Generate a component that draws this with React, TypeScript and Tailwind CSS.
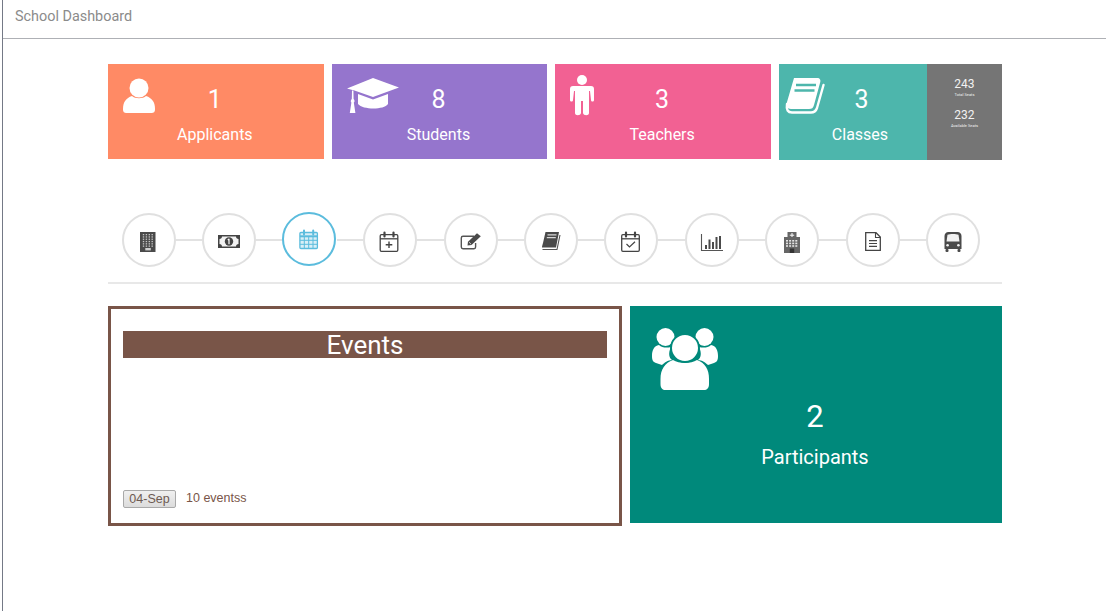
import React from "react";

const D = "#444444";

function PersonIcon() {
  return (
    <svg width="34" height="36" viewBox="0 0 34 36" fill="white" className="block">
      <path d="M1 31 C1 24 4 20 10 18 C13 21 21 21 24 18 C30 20 33 24 33 31 C33 34 32 35 29 35 L5 35 C2 35 1 34 1 31 Z" />
      <circle cx="17" cy="10" r="9.5" />
    </svg>
  );
}

function CapIcon() {
  return (
    <svg width="54" height="38" viewBox="0 0 54 38" fill="white" className="block">
      <path d="M27 1 L53 10.5 L27 20 L7 13 L6.4 13 L1 11.5 Z" />
      <path d="M12 17 L27 22.5 L42 17 L42 27 C38 33 17 33 12 27 Z" />
      <path d="M6 13.5 L7.4 13.5 L7.6 22 C9 23.5 8.6 25 7.8 25.6 L9.4 36 L3.8 36 L5.4 25.6 C4.6 25 4.4 23.4 5.8 22 Z" />
    </svg>
  );
}

function TeacherIcon() {
  return (
    <svg width="24" height="41" viewBox="0 0 24 41" fill="white" className="block">
      <circle cx="12" cy="5" r="5" />
      <path d="M3 11 L21 11 C23 11 24 12 24 14 L24 25 C24 27 21 27 21 25 L20 16 L19 16 L19 38 C19 41 13.5 41 13 38 L13 26 L11 26 L11 38 C10.5 41 5 41 5 38 L5 16 L4 16 L3 25 C3 27 0 27 0 25 L0 14 C0 12 1 11 3 11 Z" />
    </svg>
  );
}

function BookIcon() {
  return (
    <svg width="40" height="37" viewBox="0 0 40 37" className="block">
      <path d="M9 1 L32 1 C35 1 36 3 35 6 L29 28 C28 31 27 32 24 32 L6 32 C2 32 1 29 2 25 Z" fill="white" />
      <path d="M2 27 C1 33 3 35.5 7 35.5 L26 35.5 C29 35.5 31 34 32 31 L38.5 8" fill="none" stroke="white" strokeWidth="2.4" strokeLinecap="round" />
      <path d="M11 8 L31 8 M9.5 13.5 L29.5 13.5" stroke="#4db6ac" strokeWidth="2.4" />
    </svg>
  );
}

function GroupIcon() {
  return (
    <svg width="67" height="64" viewBox="0 0 67 64" fill="white" className="block">
      <circle cx="13.5" cy="10" r="9" />
      <circle cx="52.5" cy="10" r="9" />
      <path d="M0 29 C0 23 2 19 7 18 C10 21 15 21 19 20 C16 26 17 31 20 33 C16 33 12 36 10 38 L4 36 C1 35 0 33 0 29 Z" />
      <path d="M66 29 C66 23 64 19 59 18 C56 21 51 21 47 20 C50 26 49 31 46 33 C50 33 54 36 56 38 L62 36 C65 35 66 33 66 29 Z" />
      <path d="M8.5 52 C8.5 42 13 36 21 33 C27 37 39 37 45 33 C53 36 57 42 57 52 L57 57 C57 61 55 63 52 63 L13.5 63 C10.5 63 8.5 61 8.5 57 Z" />
      <circle cx="33" cy="21" r="14" stroke="#00897b" strokeWidth="2" />
    </svg>
  );
}

function Svg({ children }: { children: React.ReactNode }) {
  return (
    <svg width="28" height="28" viewBox="0 0 28 28" className="block">
      {children}
    </svg>
  );
}

function BuildingStep() {
  const dots: React.ReactNode[] = [];
  for (let r = 0; r < 6; r++) {
    for (let c = 0; c < 4; c++) {
      dots.push(<rect key={`${r}-${c}`} x={7.8 + c * 2.9} y={8 + r * 2.3} width="1.4" height="1.3" fill="#c4c4c4" />);
    }
  }
  return (
    <Svg>
      <rect x="5" y="6" width="15.5" height="20" fill="#4a4a4a" />
      {dots}
      <rect x="10.3" y="22" width="5.5" height="2.4" fill="#d0d0d0" />
    </Svg>
  );
}

function MoneyStep() {
  return (
    <Svg>
      <rect x="3" y="9" width="22" height="13" fill={D} />
      <path d="M7 10.5 L21 10.5 C21 11.7 22 13 23.5 13 L23.5 18 C22 18 21 19.3 21 20.5 L7 20.5 C7 19.3 6 18 4.5 18 L4.5 13 C6 13 7 11.7 7 10.5 Z" fill="#f2f2f2" />
      <circle cx="14" cy="15.5" r="4.2" fill={D} />
      <path d="M14 12.8 L14 18.2 M12.8 14 L14 12.8" stroke="white" strokeWidth="1.2" fill="none" />
    </Svg>
  );
}

function CalendarBase({ color }: { color: string }) {
  return (
    <>
      <rect x="4.7" y="8.7" width="17.6" height="16.6" rx="1.2" fill="none" stroke={color} strokeWidth="1.3" />
      <path d="M4.7 12.8 L22.3 12.8" stroke={color} strokeWidth="1.3" />
      <path d="M9 6.5 L9 10.5 M18 6.5 L18 10.5" stroke={color} strokeWidth="2.2" strokeLinecap="round" />
    </>
  );
}

function CalendarStep() {
  const c = "#5bbcdd";
  return (
    <svg width="28" height="28" viewBox="0 0 28 28" className="block">
      <rect x="4.9" y="7.5" width="17.5" height="16" rx="1" fill="#d9eff7" stroke={c} strokeWidth="1.3" />
      <path d="M4.9 11.3 L22.4 11.3" stroke={c} strokeWidth="2" />
      <path d="M4.9 15.3 L22.4 15.3 M4.9 19.3 L22.4 19.3 M9.3 11 L9.3 23.5 M13.7 11 L13.7 23.5 M18 11 L18 23.5" stroke={c} strokeWidth="1" />
      <path d="M9 5.5 L9 9.5 M18.2 5.5 L18.2 9.5" stroke={c} strokeWidth="2" strokeLinecap="round" />
    </svg>
  );
}

function CalendarPlusStep() {
  return (
    <Svg>
      <g transform="translate(-0.5 0)">
        <CalendarBase color={D} />
      </g>
      <path d="M13 15.5 L13 22 M9.7 18.8 L16.3 18.8" stroke={D} strokeWidth="1.4" />
    </Svg>
  );
}

function EditStep() {
  return (
    <Svg>
      <path d="M18.6 17 L18.6 21 C18.6 22 18 22.7 17 22.7 L6 22.7 C5 22.7 4.3 22 4.3 21 L4.3 12 C4.3 11 5 10.3 6 10.3 L17 10.3" fill="none" stroke="#555" strokeWidth="1.4" />
      <path d="M10.5 19.5 L11 15.8 L20 7.3 L23.8 10.3 L14.5 19 Z" fill="#4a4a4a" />
      <path d="M12 16.2 L14.1 18.2" stroke="white" strokeWidth="0.7" />
    </Svg>
  );
}

function BookStep() {
  return (
    <Svg>
      <path d="M8.5 6 L22 6 L19 21.5 L5 21.5 C5 20 5.5 19 6 17 Z" fill="#4a4a4a" />
      <path d="M5.5 23.5 L20 23.5 L23 9" fill="none" stroke="#555" strokeWidth="1.1" />
      <path d="M10.5 8.8 L19.5 8.8 M9.8 11.6 L18.8 11.6" stroke="#d8d8d8" strokeWidth="1.2" />
    </Svg>
  );
}

function CalendarCheckStep() {
  return (
    <Svg>
      <CalendarBase color={D} />
      <path d="M9.5 18 L12.5 21 L18 15.8" fill="none" stroke={D} strokeWidth="1.2" />
    </Svg>
  );
}

function ChartStep() {
  return (
    <Svg>
      <path d="M3.5 8 L3.5 24.5 L25 24.5" fill="none" stroke="#555" strokeWidth="1.1" />
      <rect x="7" y="19" width="2" height="4" fill="#4a4a4a" />
      <rect x="10.5" y="13.5" width="2" height="9.5" fill="#4a4a4a" />
      <rect x="14" y="16" width="2" height="7" fill="#4a4a4a" />
      <rect x="17.5" y="11" width="2" height="12" fill="#4a4a4a" />
      <rect x="21" y="10" width="2" height="13" fill="#4a4a4a" />
    </Svg>
  );
}

function HospitalStep() {
  const dots: React.ReactNode[] = [];
  for (let r = 0; r < 3; r++) {
    for (let c = 0; c < 4; c++) {
      dots.push(<rect key={`${r}-${c}`} x={8 + c * 3.1} y={14 + r * 2.6} width="2" height="1.6" fill="#e4e4e4" />);
    }
  }
  return (
    <Svg>
      <rect x="9.5" y="6" width="9" height="7" fill="#666" />
      <path d="M14 7 L14 11.5 M11.8 9.2 L16.2 9.2" stroke="white" strokeWidth="1" />
      <rect x="6" y="11" width="16" height="16" fill="#666" />
      {dots}
      <rect x="11.8" y="22.5" width="4.4" height="4.5" fill="#333" />
    </Svg>
  );
}

function FileStep() {
  return (
    <Svg>
      <path d="M6.7 6.7 L17 6.7 L21.3 11 L21.3 24.3 L6.7 24.3 Z" fill="none" stroke={D} strokeWidth="1.3" />
      <path d="M16.5 6.7 L16.5 11.5 L21.3 11.5" fill="none" stroke={D} strokeWidth="1.1" />
      <path d="M10 14.7 L18 14.7 M10 17.5 L18 17.5 M10 20.3 L18 20.3" stroke={D} strokeWidth="1.2" />
    </Svg>
  );
}

function BusStep() {
  return (
    <Svg>
      <path d="M9.5 6 L18.5 6 C21 6 22.5 8 22.5 10 L22.5 23 L5.5 23 L5.5 10 C5.5 8 7 6 9.5 6 Z" fill="#4a4a4a" />
      <path d="M8.5 8.8 C11 7.6 17 7.6 19.5 8.8 L20.5 15.5 L7.5 15.5 Z" fill="#f2f2f2" />
      <rect x="6.5" y="23" width="3" height="3" rx="1" fill="#4a4a4a" />
      <rect x="18.5" y="23" width="3" height="3" rx="1" fill="#4a4a4a" />
      <circle cx="8.6" cy="19.3" r="1.3" fill="#f2f2f2" />
      <circle cx="19.4" cy="19.3" r="1.3" fill="#f2f2f2" />
    </Svg>
  );
}

const steps: { icon: React.ReactNode; active?: boolean }[] = [
  { icon: <BuildingStep /> },
  { icon: <MoneyStep /> },
  { icon: <CalendarStep />, active: true },
  { icon: <CalendarPlusStep /> },
  { icon: <EditStep /> },
  { icon: <BookStep /> },
  { icon: <CalendarCheckStep /> },
  { icon: <ChartStep /> },
  { icon: <HospitalStep /> },
  { icon: <FileStep /> },
  { icon: <BusStep /> },
];

function StatBody({ value, label }: { value: string; label: string }) {
  return (
    <div className="flex flex-col items-center">
      <div className="text-[25px] leading-[30px] mt-[21px]">{value}</div>
      <div className="text-[16px] leading-[20px] mt-[10px]">{label}</div>
    </div>
  );
}

function StatCard({ bg, icon, value, label, iconBox }: { bg: string; icon: React.ReactNode; value: string; label: string; iconBox: string }) {
  return (
    <div className={`${bg} h-[95px] text-white flex`}>
      <div className="w-0 shrink-0">
        <div className={iconBox}>{icon}</div>
      </div>
      <div className="flex-1 pr-[2px]">
        <StatBody value={value} label={label} />
      </div>
    </div>
  );
}

export default function App() {
  return (
    <div className="ml-[2px] min-h-[611px] border-l border-[#747986] bg-white font-['Roboto',sans-serif]">
      <header className="h-[39px] border-b border-[#aeb0b5] pl-3 pb-[5px] flex items-center text-[14.4px] text-[#8b8b8b]">
        School Dashboard
      </header>

      <main className="ml-[105px] w-[894px] pt-[25px]">
        <div className="grid grid-cols-[215.67px_215.67px_215.67px_1fr] gap-2 items-start">
          <StatCard bg="bg-[#ff8a65]" icon={<PersonIcon />} value="1" label="Applicants" iconBox="ml-[14px] pt-[14px] w-[40px]" />
          <StatCard bg="bg-[#9575cd]" icon={<CapIcon />} value="8" label="Students" iconBox="ml-[14px] pt-[13px] w-[60px]" />
          <StatCard bg="bg-[#f26193]" icon={<TeacherIcon />} value="3" label="Teachers" iconBox="ml-[15px] pt-[11px] w-[40px]" />
          <div className="h-[96px] flex text-white">
            <div className="w-[148px] bg-[#4db6ac] flex">
              <div className="w-[47px] shrink-0 pl-[6px] pt-[13px]">
                <BookIcon />
              </div>
              <div className="w-[68px]">
                <div className="flex flex-col items-center">
                  <div className="text-[25px] leading-[30px] mt-[21px] pl-[3px]">3</div>
                  <div className="text-[16px] leading-[20px] mt-[10px]">Classes</div>
                </div>
              </div>
            </div>
            <div className="flex-1 bg-[#757575] flex flex-col items-center pt-[13px] text-[#f2f2f2]">
              <div className="text-[12px] leading-[14px]">243</div>
              <div className="text-[4px] leading-[5px] mt-[1px]">Total Seats</div>
              <div className="text-[12px] leading-[14px] mt-[11px]">232</div>
              <div className="text-[4px] leading-[5px] mt-[1px]">Available Seats</div>
            </div>
          </div>
        </div>

        <div className="mt-[53px] ml-[14px] w-[858px] flex items-center h-[54px]">
          {steps.map((s, i) => (
            <React.Fragment key={i}>
              {i > 0 && <div className="flex-1 h-[2px] bg-[#e2e2e2]" />}
              <div
                className={`w-[54px] h-[54px] shrink-0 rounded-full bg-white border-2 flex items-center justify-center ${
                  s.active ? "border-[#5bbcdd] -translate-x-px -translate-y-px" : "border-[#e0e0e0]"
                }`}
              >
                {s.icon}
              </div>
            </React.Fragment>
          ))}
        </div>

        <div className="mt-[15px] h-[2px] bg-[#e8e8e8]" />

        <div className="mt-[22px] flex gap-2 items-start">
          <section className="w-[514px] h-[220px] border-[3px] border-[#795548] px-3 pt-[22px] pb-[15px] flex flex-col justify-between">
            <div className="h-[27px] bg-[#795548] text-white text-center text-[26px] leading-[29px]">Events</div>
            <div className="flex items-center font-['Liberation_Sans',sans-serif] text-[12.5px] text-[#795548]">
              <button className="w-[53px] h-[18px] rounded-[2px] border border-[#a9a9a9] bg-[linear-gradient(#f0f0f0,#dcdcdc)] text-[#6d5a52] text-[12.5px] leading-[16px] text-center">
                04-Sep
              </button>
              <span className="ml-[10px]">10 eventss</span>
            </div>
          </section>

          <section className="w-[372px] h-[217px] bg-[#00897b] text-white">
            <div className="pl-[22px] pt-[21px]">
              <GroupIcon />
            </div>
            <div className="flex flex-col items-center pr-[2px]">
              <div className="mt-[8px] text-[31px] leading-[36px]">2</div>
              <div className="mt-[8px] text-[20px] leading-[28px]">Participants</div>
            </div>
          </section>
        </div>
      </main>
    </div>
  );
}
